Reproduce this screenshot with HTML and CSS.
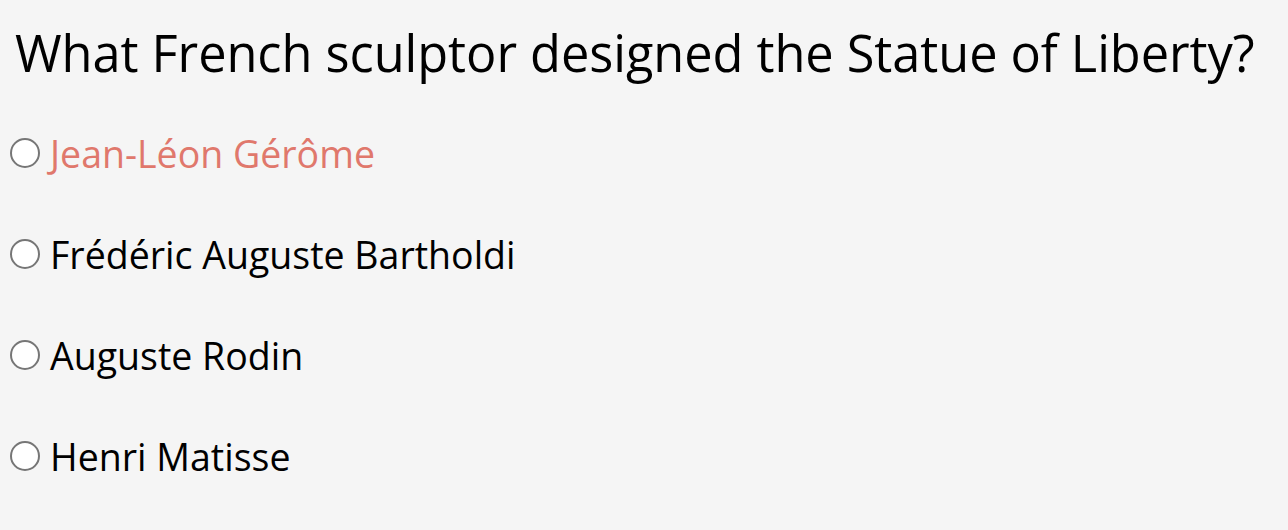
FILE: index.html
```html
<!DOCTYPE html>
<html>
<head>
<meta charset="utf-8">
<link rel="stylesheet" href="styles.css">
</head>
<body>
<div class="quiz">
  <h1 class="question">What French sculptor designed the Statue of Liberty?</h1>
  <ul class="options">
    <li class="option wrong"><span class="radio"></span><span class="label">Jean-Léon Gérôme</span></li>
    <li class="option"><span class="radio"></span><span class="label">Frédéric Auguste Bartholdi</span></li>
    <li class="option"><span class="radio"></span><span class="label">Auguste Rodin</span></li>
    <li class="option"><span class="radio"></span><span class="label">Henri Matisse</span></li>
  </ul>
</div>
</body>
</html>
```
FILE: styles.css
```css
html, body {
  margin: 0;
  padding: 0;
  background: #f5f5f5;
  height: 100%;
}
body {
  font-family: "Open Sans", "Noto Sans", sans-serif;
  color: #000;
}
.quiz {
  padding: 18px 15px 0 15px;
}
.question {
  margin: 0;
  font-weight: 400;
  font-size: 50.5px;
  line-height: 70px;
  letter-spacing: -0.05px;
  color: #000;
}
.options {
  list-style: none;
  margin: 0;
  padding: 0;
  margin-left: -5px;
  margin-top: 42px;
  display: flex;
  flex-direction: column;
  gap: 55px;
}
.option {
  display: flex;
  align-items: center;
  gap: 10px;
  height: 46px;
  font-size: 37.5px;
}
.radio {
  width: 30px;
  height: 30px;
  border: 2px solid #767676;
  border-radius: 50%;
  background: #fff;
  flex: none;
  box-sizing: border-box;
}
.wrong .label {
  color: #e0786c;
}
```
